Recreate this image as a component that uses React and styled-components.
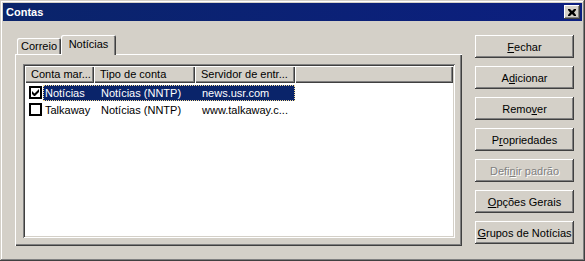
import React from "react";
import styled, { createGlobalStyle } from "styled-components";

const GlobalStyle = createGlobalStyle`
  body {
    margin: 0;
    background: #d4d0c8;
    font-family: "Liberation Sans", Arial, sans-serif;
    font-size: 11px;
  }
`;

const FACE = "#d4d0c8";

const Window = styled.div`
  width: 585px;
  height: 261px;
  box-sizing: border-box;
  padding: 3px;
  background: ${FACE};
  display: flex;
  flex-direction: column;
  box-shadow: inset -1px -1px #404040, inset 1px 1px ${FACE},
    inset -2px -2px #808080, inset 2px 2px #fff;
`;

const TitleBar = styled.div`
  height: 18px;
  display: flex;
  align-items: center;
  justify-content: space-between;
  padding: 0 2px 0 3px;
  background: linear-gradient(to right, #0a246a, #0c1f80);
`;

const Title = styled.span`
  color: #fff;
  font-weight: bold;
  font-size: 11px;
`;

const CloseButton = styled.div`
  width: 16px;
  height: 14px;
  background: ${FACE};
  display: flex;
  align-items: center;
  justify-content: center;
  box-shadow: inset -1px -1px #404040, inset 1px 1px #fff,
    inset -2px -2px #808080;
`;

const Body = styled.div`
  flex: 1;
  display: flex;
  gap: 13px;
  padding: 14px 7px 12px 12px;
`;

const TabArea = styled.div`
  width: 447px;
  display: flex;
  flex-direction: column;
`;

const TabStrip = styled.div`
  height: 19px;
  display: flex;
  align-items: flex-end;
  padding-left: 2px;
`;

const Tab = styled.div`
  position: relative;
  box-sizing: border-box;
  width: ${(p) => p.$width}px;
  height: ${(p) => (p.$active ? 20 : 16)}px;
  margin-bottom: ${(p) => (p.$active ? -1 : 0)}px;
  z-index: ${(p) => (p.$active ? 1 : 0)};
  display: flex;
  align-items: center;
  justify-content: center;
  padding-bottom: ${(p) => (p.$active ? 2 : 0)}px;
  background: ${FACE};
  border-radius: 2px 2px 0 0;
  box-shadow: inset 1px 1px #fff, inset -1px 0 #404040, inset -2px 0 #808080;
`;

const Panel = styled.div`
  flex: 1;
  display: flex;
  padding: 10px 7px 8px 8px;
  box-shadow: inset 1px 1px #fff, inset -1px -1px #404040,
    inset -2px -2px #808080;
`;

const ListView = styled.div`
  flex: 1;
  background: #fff;
  padding: 2px;
  display: flex;
  flex-direction: column;
  box-shadow: inset 1px 1px #808080, inset -1px -1px #fff,
    inset 2px 2px #404040, inset -2px -2px ${FACE};
`;

const Header = styled.div`
  display: flex;
  height: 17px;
`;

const HeaderCell = styled.div`
  box-sizing: border-box;
  width: ${(p) => (p.$width ? `${p.$width}px` : "auto")};
  flex: ${(p) => (p.$width ? "none" : 1)};
  padding-left: 6px;
  line-height: 17px;
  white-space: nowrap;
  overflow: hidden;
  background: ${FACE};
  box-shadow: inset 1px 1px #fff, inset -1px -1px #404040,
    inset -2px -2px #808080;
`;

const Rows = styled.div`
  padding-top: 1px;
`;

const Row = styled.div`
  display: flex;
  align-items: center;
  height: 17px;
  padding-left: 4px;
`;

const CheckBox = styled.div`
  box-sizing: border-box;
  width: 13px;
  height: 13px;
  margin-right: 1px;
  border: 2px solid #000;
  background: #fff;
  display: flex;
  align-items: center;
  justify-content: center;
`;

const Selection = styled.div`
  display: flex;
  height: 16px;
  box-sizing: border-box;
  align-items: center;
  background: ${(p) => (p.$selected ? "#0a246a" : "transparent")};
  color: ${(p) => (p.$selected ? "#fff" : "#000")};
  border: 1px dotted ${(p) => (p.$selected ? "#f5db95" : "transparent")};
`;

const Cell = styled.div`
  box-sizing: border-box;
  width: ${(p) => p.$width}px;
  padding-left: ${(p) => p.$pad}px;
  white-space: nowrap;
  overflow: hidden;
`;

const ButtonColumn = styled.div`
  width: 99px;
  display: flex;
  flex-direction: column;
  gap: 8px;
`;

const Button = styled.div`
  height: 23px;
  display: flex;
  align-items: center;
  justify-content: center;
  background: ${FACE};
  color: ${(p) => (p.$disabled ? "#808080" : "#000")};
  text-shadow: ${(p) => (p.$disabled ? "1px 1px #fff" : "none")};
  box-shadow: inset -1px -1px #404040, inset 1px 1px #fff,
    inset -2px -2px #808080;
`;

const Key = styled.span`
  text-decoration: underline;
  text-underline-offset: 1px;
`;

const accounts = [
  { name: "Notícias", type: "Notícias (NNTP)", server: "news.usr.com", checked: true, selected: true },
  { name: "Talkaway", type: "Notícias (NNTP)", server: "www.talkaway.c...", checked: false, selected: false },
];

const buttons = [
  ["", "F", "echar"],
  ["A", "d", "icionar"],
  ["Remo", "v", "er"],
  ["P", "r", "opriedades"],
  ["Defi", "n", "ir padrão", true],
  ["", "O", "pções Gerais"],
  ["", "G", "rupos de Notícias"],
];

export default function App() {
  return (
    <>
      <GlobalStyle />
      <Window>
        <TitleBar>
          <Title>Contas</Title>
          <CloseButton>
            <svg width="8" height="7" viewBox="0 0 8 7">
              <path d="M0 0h2l2 2 2-2h2v1L6 3.5 8 6v1H6L4 5 2 7H0V6l2-2.5L0 1z" fill="#000" />
            </svg>
          </CloseButton>
        </TitleBar>
        <Body>
          <TabArea>
            <TabStrip>
              <Tab $width={44}>Correio</Tab>
              <Tab $width={55} $active>Notícias</Tab>
            </TabStrip>
            <Panel>
              <ListView>
                <Header>
                  <HeaderCell $width={69}>Conta mar...</HeaderCell>
                  <HeaderCell $width={101}>Tipo de conta</HeaderCell>
                  <HeaderCell $width={100}>Servidor de entr...</HeaderCell>
                  <HeaderCell />
                </Header>
                <Rows>
                  {accounts.map((a) => (
                    <Row key={a.name}>
                      <CheckBox>
                        {a.checked && (
                          <svg width="7" height="7" viewBox="0 0 7 7">
                            <path d="M0 2v3l2 2h1l4-4V0L2.5 4.5z" fill="#000" />
                          </svg>
                        )}
                      </CheckBox>
                      <Selection $selected={a.selected}>
                        <Cell $width={50} $pad={1}>{a.name}</Cell>
                        <Cell $width={101} $pad={7}>{a.type}</Cell>
                        <Cell $width={99} $pad={7}>{a.server}</Cell>
                      </Selection>
                    </Row>
                  ))}
                </Rows>
              </ListView>
            </Panel>
          </TabArea>
          <ButtonColumn>
            {buttons.map(([pre, key, post, disabled]) => (
              <Button key={pre + key + post} $disabled={disabled}>
                {pre}
                <Key>{key}</Key>
                {post}
              </Button>
            ))}
          </ButtonColumn>
        </Body>
      </Window>
    </>
  );
}
